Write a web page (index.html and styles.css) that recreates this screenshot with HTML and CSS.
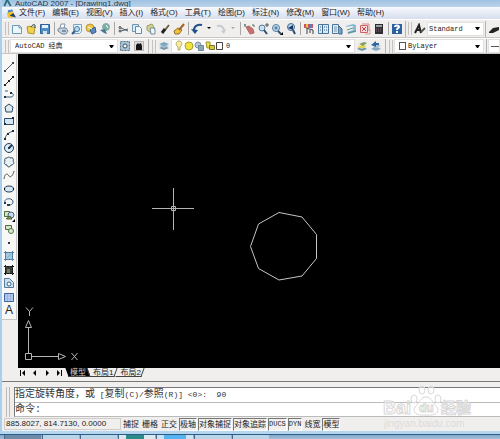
FILE: index.html
```html
<!DOCTYPE html>
<html lang="zh-CN">
<head>
  <meta charset="UTF-8">
  <meta name="viewport" content="width=device-width, initial-scale=1.0">
  <title>AutoCAD 2007 - [Drawing1.dwg]</title>
  <link rel="stylesheet" href="styles.css">
</head>
<body>
  <div class="window">
    <header class="title">
      <svg class="logo" viewBox="0 0 9 12"><path d="M1 11L4 4l4 7" fill="none" stroke="#2a6f80" stroke-width="2"/></svg>
      <h1>AutoCAD 2007 - [Drawing1.dwg]</h1>
    </header>

    <!-- 菜单 -->
    <nav class="menu">
      <svg class="logo" viewBox="0 0 10 11"><path d="M1 2l5-1 1 3-6 3z" fill="#3f86cf"/><path d="M0 5l6-2 3 5-1 2H1z" fill="#f2c12e"/><path d="M3 8l4-3 3 5z" fill="#1c3f78"/></svg>
      <button>文件(F)</button>
      <button>编辑(E)</button>
      <button>视图(V)</button>
      <button>插入(I)</button>
      <button>格式(O)</button>
      <button>工具(T)</button>
      <button>绘图(D)</button>
      <button>标注(N)</button>
      <button>修改(M)</button>
      <button>窗口(W)</button>
      <button>帮助(H)</button>
    </nav>

    <!-- 标准工具栏 -->
    <div class="bar bar1">
      <i class="grip"></i>
      <button class="ico" aria-label="新建"><svg viewBox="0 0 12 12"><path d="M1.500 2.500h7l2 2v6h-9z" fill="#e9f6fc" stroke="#6d9bb8"/><path d="M8 2v3h3" fill="none" stroke="#6d9bb8"/></svg></button>
      <button class="ico" aria-label="打开"><svg viewBox="0 0 12 12"><path d="M2 4l3-1 1 1h4l-1 7-6-1z" fill="#f3d24a" stroke="#a8963f"/><path d="M6 4c1-2 3-3 4-2v3" fill="none" stroke="#3b4f4a"/></svg></button>
      <button class="ico" aria-label="保存"><svg viewBox="0 0 12 12"><path d="M1.500 1.500h9v9h-9z" fill="#4f8fc6" stroke="#2c5f93"/><path d="M3 2h6v3H3z" fill="#e4f1fa"/><path d="M4 8h4v3H4z" fill="#cfe2f2"/></svg></button>
      <i class="sep"></i>
      <button class="ico" aria-label="打印"><svg viewBox="0 0 12 12"><path d="M3 5l1-4h4l-1 4" fill="#fff" stroke="#8093a8"/><path d="M1 6l2-1h6l2 3-2 3H5L1 8z" fill="#c6d3df" stroke="#7388a0"/><path d="M5 8h4" stroke="#2f4a70"/></svg></button>
      <button class="ico" aria-label="打印预览"><svg viewBox="0 0 12 12"><path d="M2.500 1.500h8v7l-2 2h-6z" fill="#e1f1fa" stroke="#7fa6c2"/><circle cx="6" cy="6" r="2.500" fill="#bcdff2" stroke="#4c7ba2"/><path d="M4 8l-3 3" stroke="#355a85" stroke-width="2"/></svg></button>
      <button class="ico" aria-label="发布"><svg viewBox="0 0 12 12"><circle cx="5" cy="5" r="4" fill="#f1c63a" stroke="#b9983f"/><path d="M5 7l5-3 1 5-4 2z" fill="#5a8ac4" stroke="#355c90"/><path d="M3 4l4 2" stroke="#fff"/></svg></button>
      <button class="ico" aria-label="三维发布"><svg viewBox="0 0 12 12"><circle cx="7" cy="4" r="3.500" fill="#78b09a" stroke="#8bacc0"/><path d="M1 7l5-1 2 5-3-1z" fill="#4a7690"/><path d="M7 2l2 3" stroke="#fff"/></svg></button>
      <i class="sep"></i>
      <button class="ico" aria-label="剪切"><svg viewBox="0 0 12 12"><path d="M4 5l7 3M4 8l7-2" stroke="#4d5962"/><circle cx="3" cy="4.500" r="1" fill="none" stroke="#444"/><circle cx="3" cy="8" r="1" fill="none" stroke="#444"/></svg></button>
      <button class="ico" aria-label="复制"><svg viewBox="0 0 12 12"><path d="M1.500 1.500h6v7h-6z" fill="#d9edf8" stroke="#7294ac"/><path d="M4.500 3.500h4l2 2v5h-6z" fill="#eef8fd" stroke="#668ba5"/></svg></button>
      <button class="ico" aria-label="粘贴"><svg viewBox="0 0 12 12"><path d="M2 3l5-2 3 5-4 4-4-3z" fill="#d9d288" stroke="#8d9e70"/><path d="M5 5h4l1 2v4H6z" fill="#eef6fb" stroke="#6f8ea0"/></svg></button>
      <button class="ico" aria-label="特性匹配"><svg viewBox="0 0 12 12"><path d="M10 2L6 7" stroke="#6a5e45" stroke-width="2"/><path d="M6 6L3 10" stroke="#222" stroke-width="3"/></svg></button>
      <button class="ico" aria-label="块编辑器"><svg viewBox="0 0 12 12"><path d="M1 8l4-3 4 2-3 4H2z" fill="#f0c23b" stroke="#927126"/><path d="M11 1L6 7" stroke="#a2622c" stroke-width="2"/></svg></button>
      <i class="sep"></i>
      <button class="ico" aria-label="放弃"><svg viewBox="0 0 12 12"><path d="M3 7c0-4 4-6 8-5" fill="none" stroke="#1f4f8f" stroke-width="2"/><path d="M0 6l7 1-3 4z" fill="#1f4f8f"/></svg></button>
      <button class="drop" aria-label="放弃列表"><svg viewBox="0 0 5 3"><path d="M1 0h4L3 2z"/></svg></button>
      <button class="ico" aria-label="重做"><svg viewBox="0 0 12 12"><path d="M2 3c4-1 6 1 7 4" fill="none" stroke="#c6cbce" stroke-width="2"/><path d="M11 6L6 8l3 3z" fill="#c6cbce"/></svg></button>
      <button class="drop off" aria-label="重做列表"><svg viewBox="0 0 5 3"><path d="M1 0h4L3 2z"/></svg></button>
      <i class="sep"></i>
      <button class="ico" aria-label="实时平移"><svg viewBox="0 0 12 12"><path d="M3 4l3-1 4 3 1 4-4 1z" fill="#c96f70" stroke="#b0696a"/><path d="M1 2h2M2 1v3M9 2h2v2" fill="none" stroke="#4e7460"/></svg></button>
      <button class="ico" aria-label="实时缩放"><svg viewBox="0 0 12 12"><circle cx="5" cy="5" r="3" fill="#c6e2f1" stroke="#547a9b"/><path d="M7 7l3 4" stroke="#314c70" stroke-width="2"/><path d="M8 2h4M10 0v4" stroke="#555"/></svg></button>
      <button class="ico" aria-label="窗口缩放"><svg viewBox="0 0 12 12"><circle cx="5" cy="5" r="3.500" fill="#c6e2f1" stroke="#547a9b"/><path d="M3.500 3.500h3v3h-3z" fill="#5c84a6"/><path d="M7 8l3 3" stroke="#314c70" stroke-width="2"/><path d="M12 9v3H9z"/></svg></button>
      <button class="ico" aria-label="缩放上一个"><svg viewBox="0 0 12 12"><circle cx="6" cy="4" r="3.500" fill="#b4d5e8" stroke="#456f96"/><path d="M8 7l2 4" stroke="#314c70" stroke-width="2"/><path d="M3 5l5-3v5z" fill="#1d3767"/></svg></button>
      <i class="sep"></i>
      <button class="ico" aria-label="特性"><svg viewBox="0 0 12 12"><path d="M1 1h9v4H1z" fill="#ca5262"/><path d="M3 1h2v4H3z" fill="#e7c44b"/><path d="M7 1h2v4H7z" fill="#4f83bc"/><path d="M3 5l7 2v4M4 6v5M7 7v3" fill="none" stroke="#3a3f4f"/></svg></button>
      <button class="ico" aria-label="设计中心"><svg viewBox="0 0 12 12"><path d="M1.500 1.500h10v9h-10z" fill="#d8ebf6" stroke="#4b759b"/><path d="M5.500 2v8M3 4h1M3 7h1M7 4h1M9 4h1M7 7h1M9 7h1" stroke="#3c668e"/></svg></button>
      <button class="ico" aria-label="工具选项板"><svg viewBox="0 0 12 12"><path d="M1.500 1.500h6v9h-6z" fill="#dcebf5" stroke="#4b759b"/><path d="M3 4h3M3 6h3M3 8h3" stroke="#7b9aaf"/><path d="M8 3l3 3v5H8" fill="#7ba6c4" stroke="#38618a"/></svg></button>
      <button class="ico" aria-label="图纸集"><svg viewBox="0 0 12 12"><path d="M1 3l7-2 3 1v7l-8 2z" fill="#8ab8d8"/><path d="M1 4l7-1v4l-6 2z" fill="#eef5ee"/><path d="M3 10l8-2M2 7l6-2" stroke="#5c8d81"/></svg></button>
      <button class="ico" aria-label="标记集"><svg viewBox="0 0 12 12"><path d="M1.500 2.500h7v7h-7z" fill="#f7dfdf" stroke="#d05f66"/><path d="M3 1h7v7" fill="none" stroke="#dc8588"/><path d="M3 4l4 4M7 4L3 8" stroke="#c23d48"/><path d="M6 11h5V6" fill="none" stroke="#e09a9b"/></svg></button>
      <button class="ico" aria-label="计算器"><svg viewBox="0 0 12 12"><path d="M2 1h8v10H2z" fill="#2d2c33"/><path d="M3 2h6v2H3z" fill="#95a39c"/><path d="M3 6h6M3 8h6" stroke="#887177" stroke-dasharray="1 1"/></svg></button>
      <i class="sep"></i>
      <button class="ico" aria-label="帮助"><svg viewBox="0 0 12 12"><path d="M1 1h10v10H1z" fill="#2a62a3"/><path d="M4 4c0-2 4-2 4 0 0 1-2 1-2 3M6 8v2" fill="none" stroke="#fff" stroke-width="2"/></svg></button>
      <i class="edge"></i>
      <i class="grip"></i>
      <button class="ico" aria-label="文字样式"><svg viewBox="0 0 12 12"><path d="M1 10L5 2l2 8M3 7h4" fill="none" stroke="#222" stroke-width="2"/><path d="M7 9l4-4" stroke="#555" stroke-width="2"/></svg></button>
      <label class="combo style">
        <select aria-label="文字样式名"><option>Standard</option></select>
        <svg viewBox="0 0 5 3"><path d="M0 0h5L3 3H2z"/></svg>
      </label>
      <i class="edge"></i>
      <button class="ico" aria-label="标注样式"><svg viewBox="0 0 12 12"><path d="M2 9l4-4 6-1v3L6 10H2z" fill="#222"/></svg></button>
    </div>

    <!-- 工作空间 / 图层 / 特性 -->
    <div class="bar bar2">
      <i class="grip"></i>
      <label class="combo space">
        <select aria-label="工作空间"><option>AutoCAD 经典</option></select>
        <svg viewBox="0 0 5 3"><path d="M0 0h5L3 3H2z"/></svg>
      </label>
      <button class="ico" aria-label="工作空间设置"><svg viewBox="0 0 12 12"><path d="M1.500 1.500h9v9h-9z" fill="#a9c0d0" stroke="#50728b" stroke-dasharray="2 1"/><circle cx="6" cy="6" r="2" fill="#fff" stroke="#3c5568"/></svg></button>
      <button class="ico" aria-label="我的工作空间"><svg viewBox="0 0 12 12"><path d="M1.500 1.500h9v9h-9z" fill="#ddd" stroke="#888" stroke-dasharray="1 1"/><path d="M3 5l2-2 1 1 2-1 1 3v4H3z" fill="#151515"/></svg></button>
      <i class="edge"></i>
      <i class="grip"></i>
      <button class="ico" aria-label="图层特性管理器"><svg viewBox="0 0 12 12"><path d="M1 8l5-2 5 2-5 2z" fill="#7894a8"/><path d="M1 6l5-2 5 2-5 2z" fill="#a2bccd"/><path d="M1 4l5-2 5 2-5 2z" fill="#7ba6c4"/></svg></button>
      <label class="combo layer">
        <svg class="state" viewBox="0 0 50 12">
          <path d="M5 1c3 0 4 4 1 6v3H4V7C1 5 2 1 5 1z" fill="#f7ed9d" stroke="#b3ac68"/>
          <circle cx="15" cy="6" r="4" fill="#f3e33e" stroke="#aaa128"/>
          <circle cx="24" cy="5" r="3" fill="#b3c8d8" stroke="#7b95a9"/><path d="M24.500 5.500h5v5h-5z" fill="#8ba5b8" stroke="#718a9c"/>
          <path d="M32 2h4v6h-3z" fill="#efe24a" stroke="#99912e"/><path d="M35.500 5.500h5v4h-5z" fill="#d9c93d" stroke="#7c7632"/>
          <path d="M42.500 2.500h6v7h-6z" fill="#fff" stroke="#444"/>
        </svg>
        <select aria-label="图层"><option>0</option></select>
        <svg viewBox="0 0 5 3"><path d="M0 0h5L3 3H2z"/></svg>
      </label>
      <button class="ico" aria-label="将对象的图层置为当前"><svg viewBox="0 0 12 12"><path d="M1 9l5-3 5 3-5 2z" fill="#6c98bd"/><path d="M1 7l5-2 5 1-5 3z" fill="#e6d44d"/><path d="M3 4l5-2 3 1-4 3z" fill="#7fa25c"/></svg></button>
      <button class="ico" aria-label="上一个图层"><svg viewBox="0 0 12 12"><path d="M1 9l5-3 5 3-5 2z" fill="#8ba8bf"/><path d="M3 6l5-2 3 2-5 2z" fill="#adc4d4"/><path d="M1 5l5-4v2h3v2H6v2z" fill="#2d66a5"/></svg></button>
      <i class="edge"></i>
      <i class="grip"></i>
      <label class="combo color">
        <i class="box"></i>
        <select aria-label="颜色"><option>ByLayer</option></select>
        <svg viewBox="0 0 5 3"><path d="M0 0h5L3 3H2z"/></svg>
      </label>
      <i class="edge"></i>
      <div class="combo line"><hr></div>
    </div>

    <main class="work">
      <!-- 绘图工具栏 -->
      <aside class="tools">
        <button aria-label="直线"><svg viewBox="0 0 12 12"><path d="M2 10l8-8" stroke="#4b5d68"/><path d="M1 10h2M9 2h2" stroke="#445" stroke-width="2"/></svg></button>
        <button aria-label="构造线"><svg viewBox="0 0 12 12"><path d="M1 11L11 1" stroke="#222"/><path d="M1 10h2M9 2h2M5 6h2" stroke="#222" stroke-width="2"/></svg></button>
        <button aria-label="多段线"><svg viewBox="0 0 12 12"><path d="M2 3h3M2 9h6c3 0 3-4 0-4" fill="none" stroke="#3d5e7d"/><path d="M1 9h2M7 5h2" stroke="#1d3349" stroke-width="2"/></svg></button>
        <button aria-label="正多边形"><svg viewBox="0 0 12 12"><path d="M6 2l4 3-1 5H3L2 5z" fill="#dceaf2" stroke="#2e4862"/></svg></button>
        <button aria-label="矩形"><svg viewBox="0 0 12 12"><path d="M1.500 3.500h9v6h-9z" fill="#d6e8f3" stroke="#2f4c69"/><path d="M1 9h2M9 3h2" stroke="#1b2e42" stroke-width="2"/></svg></button>
        <button aria-label="圆弧"><svg viewBox="0 0 12 12"><path d="M2 11c0-5 4-8 9-9" fill="none" stroke="#3d5367"/><path d="M1 10h2M4 5h2M9 2h2" stroke="#1b2e42" stroke-width="2"/></svg></button>
        <button aria-label="圆"><svg viewBox="0 0 12 12"><circle cx="6" cy="6" r="4.500" fill="#dceaf3" stroke="#1f3e60"/><path d="M6 6l3-3M5 6h2" stroke="#1f3e60" stroke-width="2"/></svg></button>
        <button aria-label="修订云线"><svg viewBox="0 0 12 12"><path d="M4 2c2-2 3 0 3 0 3-1 4 1 3 3 2 2 0 4-2 4-1 3-4 2-4 0-3 0-3-3-2-4-1-2 0-3 2-3z" fill="#e8f1f6" stroke="#30485f"/></svg></button>
        <button aria-label="样条曲线"><svg viewBox="0 0 12 12"><path d="M1 10c1-7 4-5 5-3s4 0 5-5" fill="none" stroke="#4f5051"/></svg></button>
        <button aria-label="椭圆"><svg viewBox="0 0 12 12"><ellipse cx="6" cy="6" rx="4.500" ry="3" fill="#d5e7f2" stroke="#1f3e60"/><path d="M1 6h1M10 6h1" stroke="#111" stroke-width="2"/></svg></button>
        <button aria-label="椭圆弧"><svg viewBox="0 0 12 12"><path d="M2 7C0 2 10 1 10 6c0 2-2 3-4 3" fill="none" stroke="#34577b"/><path d="M4 9h3M1 7h2" stroke="#1f3e60" stroke-width="2"/></svg></button>
        <button aria-label="插入块"><svg viewBox="0 0 12 12"><path d="M1.500 1.500h5v5h-5z" fill="#d7e4c8" stroke="#4e6d3b"/><circle cx="8" cy="5" r="3" fill="#c7dcea" stroke="#446586"/><path d="M3 9l4-3 2 3H4" fill="#90a948" stroke="#465b33"/><path d="M12 9v3H9z"/></svg></button>
        <button aria-label="创建块"><svg viewBox="0 0 12 12"><path d="M2.500 2.500h6v4h-6z" fill="#d7e4c8" stroke="#4e6d3b"/><circle cx="8" cy="8" r="2.500" fill="#dce9d7" stroke="#51753e"/></svg></button>
        <button aria-label="点"><svg viewBox="0 0 12 12"><path d="M5 6h2" stroke="#334" stroke-width="2"/></svg></button>
        <button aria-label="图案填充"><svg viewBox="0 0 12 12"><path d="M2.500 2.500h7v7h-7z" fill="#9fcbe3" stroke="#426c8b"/><path d="M1 2.500h10M1 9.500h10M2.500 1v10M9.500 1v10" stroke="#5b839d" stroke-dasharray="2 1"/><path d="M4 8l4-4" stroke="#7fb0cb"/></svg></button>
        <button aria-label="渐变色"><svg viewBox="0 0 12 12"><path d="M2 2h8v8H2z" fill="#3b4038"/><path d="M1 2.500h10M1 9.500h10M2.500 1v10M9.500 1v10" stroke="#151515" stroke-dasharray="2 1"/><path d="M4 5h3v4H4z" fill="#767d66"/></svg></button>
        <button aria-label="面域"><svg viewBox="0 0 12 12"><path d="M1.500 1.500h5l4 4v5h-9z" fill="#cde2ef" stroke="#58799a"/><circle cx="6" cy="7" r="2" fill="#fff" stroke="#3c628a"/></svg></button>
        <button aria-label="表格"><svg viewBox="0 0 12 12"><path d="M1.500 2.500h9v8h-9z" fill="#b8d1f0" stroke="#3f61a0"/><path d="M2 5h8M2 8h8M4.500 3v7M7.500 3v7" stroke="#9ab3dc"/></svg></button>
        <button class="mtext" aria-label="多行文字">A</button>
      </aside>

      <section class="drawing">
        <svg class="canvas" viewBox="0 0 482 314" preserveAspectRatio="xMinYMin meet">
          <!-- 十字光标 -->
          <path d="M134 154.500h42M155.500 134v42" stroke="#b4b4b4"/>
          <path d="M153.500 152.500h4v4h-4z" fill="none" stroke="#b4b4b4"/>
          <!-- 正九边形 -->
          <path d="M261 158.500l23 4.500 14.500 17.500v24L284 222l-23 4-20.500-11.500-8-22 8-22.500z" fill="none" stroke="#c4c4c4"/>
          <!-- UCS 图标 -->
          <g fill="none" stroke="#b4b4b4">
            <path d="M7.500 299.500h6v6h-6zM10.500 299v-25M14 302.500h27M10.500 266.500l3 7h-6zM47.500 302.500l-7 3v-6z"/>
            <path d="M8 253.500l3.500 4 3.500-4M11.500 257v5M53.500 299l6 7M59.500 299l-6 7"/>
          </g>
        </svg>
        <div class="tabs">
          <button aria-label="第一个"><svg viewBox="0 0 8 8"><path d="M1.500 1v6" stroke="#000"/><path d="M6 1v6L3 4z"/></svg></button>
          <button aria-label="上一个"><svg viewBox="0 0 8 8"><path d="M5 1v6L2 4z"/></svg></button>
          <button aria-label="下一个"><svg viewBox="0 0 8 8"><path d="M3 1v6l3-3z"/></svg></button>
          <button aria-label="最后一个"><svg viewBox="0 0 8 8"><path d="M2 1v6l3-3z"/><path d="M6.500 1v6" stroke="#000"/></svg></button>
          <button class="tab on">模型</button>
          <button class="tab">布局1</button>
          <button class="tab">布局2</button>
        </div>
      </section>
    </main>

    <!-- 命令行 -->
    <section class="command">
      <i class="hold"></i>
      <div class="log">
        <p>指定旋转角度，或<span> [</span>复制<span>(C)/</span>参照<span>(R)] &lt;0&gt;:&nbsp; 90</span></p>
        <label>命令:<input type="text" aria-label="命令"></label>
      </div>
    </section>

    <!-- 状态栏 -->
    <footer class="status">
      <output class="coord">885.8027, 814.7130, 0.0000</output>
      <button>捕捉</button>
      <button>栅格</button>
      <button>正交</button>
      <button class="on">极轴</button>
      <button class="on">对象捕捉</button>
      <button class="on">对象追踪</button>
      <button class="on en">DUCS</button>
      <button class="on en">DYN</button>
      <button>线宽</button>
      <button class="on">模型</button>
    </footer>

    <div class="mark">
      <svg viewBox="0 0 92 46">
        <g fill="#fff" fill-opacity=".5" stroke="#d8d8d8">
          <ellipse cx="33" cy="15" rx="3" ry="4"/><ellipse cx="41" cy="6" rx="3" ry="4"/><ellipse cx="50" cy="6" rx="3" ry="4"/><ellipse cx="57" cy="15" rx="3" ry="4"/>
          <path d="M45 13c6 0 7 7 11 10 3 5-1 9-11 8-10 1-14-3-11-8 4-3 5-10 11-10z"/>
        </g>
        <g class="word">
          <text x="2" y="30" font-size="18">Bai</text>
          <text x="38" y="28" font-size="12">du</text>
          <text x="60" y="29" font-size="15">经验</text>
        </g>
        <text class="site" x="3" y="43" font-size="10">jingyan.baidu.com</text>
      </svg>
    </div>
  </div>

  <div class="taskbar">
    <i class="start"></i>
    <i></i>
    <i></i>
    <i class="teal"></i>
    <i class="sky"></i>
    <i></i>
    <i></i>
  </div>
</body>
</html>
```

FILE: styles.css
```css
/* reset */
* {
  margin: 0;
  padding: 0;
  box-sizing: border-box;
}
body {
  display: flex;
  flex-direction: column;
  min-height: 100vh;
  overflow: hidden;
  background: #9dbbd9;
  color: #222;
  font: 8px/10px "Liberation Sans", "Noto Sans CJK SC", sans-serif;
}
button, select, input {
  border: 0;
  background: none;
  color: inherit;
  font: inherit;
}
button {
  white-space: nowrap;
}
svg {
  display: block;
}

.window {
  position: relative;
  flex: 1;
  display: flex;
  flex-direction: column;
  border-left: 2px solid #a9cfec;
  border-bottom: 3px solid #b4d6ee;
  background: #f0efee;
}

/* 标题 */
.title {
  display: flex;
  align-items: flex-end;
  gap: 3px;
  height: 7px;
  padding-left: 1px;
  overflow: hidden;
  background: linear-gradient(#9fc2e2, #bcd4ea);
}
.title h1 {
  color: #26384a;
  font-size: 8px;
  font-weight: normal;
  line-height: 7px;
}
.logo {
  width: 9px;
  height: 11px;
}

/* 菜单 */
.menu {
  display: flex;
  align-items: center;
  gap: 7px;
  height: 12px;
  padding-left: 5px;
  background: linear-gradient(#f7f9fd, #d6deee);
}
.menu .logo {
  margin-right: -4px;
}

/* 工具栏 */
.bar {
  display: flex;
  align-items: center;
  padding-left: 1px;
  border-top: 1px solid #fff;
  border-bottom: 1px solid #c9c7c5;
  overflow: hidden;
}
.bar1 {
  height: 19px;
}
.bar2 {
  height: 16px;
}
.grip {
  flex: none;
  width: 4px;
  height: 13px;
  margin: 0 1px 0 2px;
  border: 1px solid #c4c2c0;
  border-width: 0 1px;
}
.sep {
  flex: none;
  width: 1px;
  height: 13px;
  margin: 0 1px 0 2px;
  background: #a9a7a5;
}
.edge {
  flex: none;
  width: 1px;
  height: 16px;
  margin: 0 1px 0 2px;
  background: #b5b3b1;
}
.bar1 .edge {
  margin: 0 0 0 1px;
}
.ico {
  flex: none;
  width: 14px;
  padding: 0 1px;
}
.ico svg {
  width: 12px;
  height: 12px;
}
.drop {
  flex: none;
  width: 10px;
  padding: 0 2px;
}
.drop svg {
  width: 5px;
  height: 3px;
}
.off {
  opacity: .3;
}

/* 下拉框 */
.combo {
  display: flex;
  align-items: center;
  height: 14px;
  padding: 0 3px 0 5px;
  border: 1px solid #e3e1df;
  background: #fff;
  font-family: "Liberation Mono", "Noto Sans CJK SC", monospace;
  font-size: 7px;
}
.combo select {
  flex: 1;
  min-width: 0;
  appearance: none;
}
.combo svg {
  width: 5px;
  height: 3px;
}
.combo .state {
  width: 50px;
  height: 12px;
}
.style {
  width: 60px;
  padding-left: 1px;
}
.space {
  width: 108px;
  padding-left: 4px;
}
.layer {
  width: 184px;
  padding-left: 2px;
}
.layer select {
  padding-left: 2px;
}
.color {
  width: 90px;
  padding-left: 4px;
}
.line {
  flex: 1;
  padding: 0 0 0 2px;
}
.line hr {
  flex: 1;
  border: 0;
  border-top: 1px solid #555;
}
.box {
  width: 7px;
  height: 8px;
  margin-right: 2px;
  border: 1px solid #555;
}

/* 绘图区 */
.work {
  flex: 1;
  display: flex;
  min-height: 0;
}
.tools {
  display: flex;
  flex-direction: column;
  justify-content: space-between;
  align-self: flex-start;
  width: 15px;
  height: 266px;
  padding: 7px 1px 3px;
  border-right: 1px solid #c9c7c5;
  border-bottom: 1px solid #c9c7c5;
  background: #f8f8f7;
}
.tools button, .tools svg {
  width: 12px;
  height: 12px;
}
.tools .mtext {
  font-size: 12px;
  line-height: 12px;
}
.drawing {
  flex: 1;
  display: flex;
  flex-direction: column;
  margin-left: 1px;
  background: #000;
}
.canvas {
  flex: 1;
  width: 482px;
  min-height: 0;
}

/* 布局选项卡 */
.tabs {
  display: flex;
  align-items: center;
  height: 11px;
  padding: 0 0 2px 1px;
  background: #f0efee;
}
.tabs button {
  width: 12px;
  line-height: 9px;
}
.tabs svg {
  width: 8px;
  height: 8px;
}
.tabs .tab {
  position: relative;
  z-index: 0;
  width: auto;
  margin-right: 1px;
  padding: 0 3px;
}
.tab::before {
  content: "";
  position: absolute;
  inset: 0;
  z-index: -1;
  border: 1px solid #444;
  border-width: 0 1px 1px 0;
  transform: skewX(-20deg);
}
.tab.on::before {
  background: #000;
  transform: skewX(20deg);
}
.tabs .on {
  color: #ccc;
}

/* 命令行 */
.command {
  display: flex;
  gap: 4px;
  margin-top: 2px;
  padding: 5px 0 0 4px;
  border-top: 1px solid #77797b;
}
.hold {
  width: 4px;
  border: 1px solid #bbb;
  border-width: 0 1px;
}
.log {
  flex: 1;
  border: 1px solid #77797b;
  border-right: 0;
  border-bottom-color: #bbb;
  background: #fff;
  color: #333;
  font-family: "Liberation Mono", "Noto Sans CJK SC", monospace;
  font-size: 10px;
}
.log p, .log label {
  display: flex;
  align-items: center;
  height: 14px;
  white-space: pre;
}
.log label {
  border-top: 1px solid #bbb;
}
.log span {
  font-size: 8px;
}
.log input {
  flex: 1;
  outline: 0;
}

/* 状态栏 */
.status {
  display: flex;
  align-items: center;
  gap: 1px;
  height: 14px;
  padding: 0 2px;
}
.coord {
  width: 117px;
  padding-left: 1px;
  border: 1px solid #cfcdcb;
  line-height: 10px;
}
.status button {
  padding: 0 1px;
  line-height: 11px;
}
.status .on {
  padding: 0;
  border: 1px solid #777;
  border-right-color: #fff;
  border-bottom-color: #fff;
}
.status .en {
  font-family: "Liberation Mono", monospace;
  font-size: 7px;
}

/* 水印 */
.mark {
  position: absolute;
  right: 27px;
  bottom: 1px;
  width: 92px;
  pointer-events: none;
}
.word {
  fill: #fff;
  fill-opacity: .5;
  stroke: #d8d8d8;
  font-weight: bold;
}
.site {
  fill: #dcdbda;
}

/* 任务栏 */
.taskbar {
  display: flex;
  gap: 1px;
  height: 6px;
  padding-left: 4px;
  border-top: 1px solid #2d5d84;
  background: linear-gradient(#85a9cb, #a5c3df);
}
.taskbar i {
  width: 37px;
  border-left: 1px solid #47698c;
  background: #b9d5ea;
}
.taskbar .start {
  background: #6b8ba9;
}
.taskbar .teal {
  background: linear-gradient(90deg, #d9e9f0 20%, #2b8b8b 20%, #2b8b8b 70%, #d9e9f0 70%);
}
.taskbar .sky {
  background: linear-gradient(90deg, #cbe3f4 20%, #55b4f0 20%, #55b4f0 80%, #cbe3f4 80%);
}
```
